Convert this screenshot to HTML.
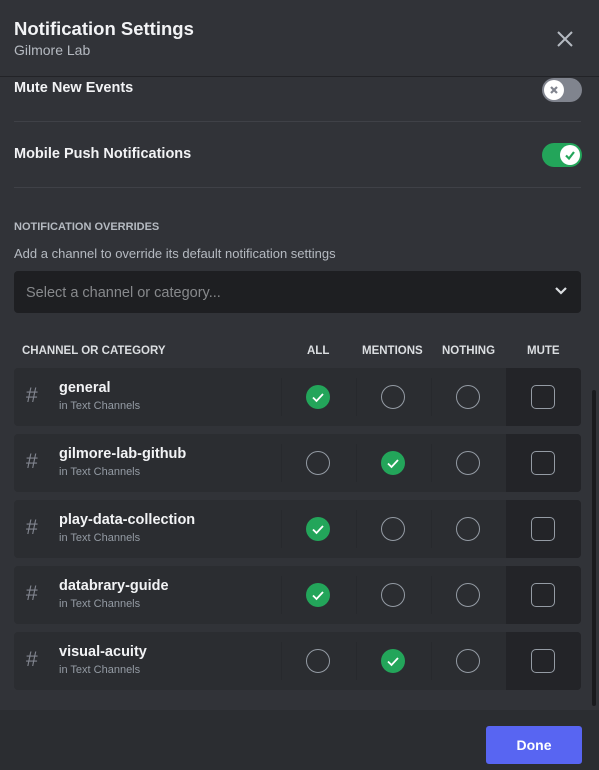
<!DOCTYPE html>
<html><head><meta charset="utf-8"><style>
*{margin:0;padding:0;box-sizing:border-box}
body{width:599px;height:770px;background:#313338;font-family:"Liberation Sans",sans-serif;position:relative;overflow:hidden;color:#f2f3f5}
.a{position:absolute}
.t{font-weight:bold;white-space:nowrap}
.row{position:absolute;left:14px;width:567px;height:58px;background:#2b2d31;border-radius:4px;overflow:hidden}
.mc{position:absolute;right:0;top:0;width:75px;height:58px;background:#232428}
.div{position:absolute;top:10px;width:1px;height:38px;background:#27292d}
.hash{position:absolute;left:12px;top:16px;font-size:21px;color:#80848e;font-weight:normal}
.nm{position:absolute;left:45px;top:12px;font-size:14.5px;font-weight:bold;color:#f2f3f5}
.sb{position:absolute;left:45px;top:32px;font-size:11px;color:#949ba4}
.c{position:absolute;top:17px;width:24px;height:24px;border-radius:50%;border:1.5px solid #949ba4}
.ck{border:none;background:#23a55a}
.sq{position:absolute;left:517px;top:17px;width:24px;height:24px;border-radius:5px;border:1.5px solid #949ba4}
.hd{position:absolute;top:345px;font-size:11.5px;font-weight:bold;color:#dbdee1}
</style></head><body>
<div class="a" style="left:0;top:0;width:599px;height:77px;background:#313338;border-bottom:1px solid #222327"></div>
<div class="a t" style="left:14px;top:18px;font-size:18.5px">Notification Settings</div>
<div class="a" style="left:14px;top:42px;font-size:14px;color:#b5bac1">Gilmore Lab</div>
<svg class="a" style="left:556px;top:30px" width="18" height="18"><path d="M2 2L16 16M16 2L2 16" stroke="#b5bac1" stroke-width="2"/></svg>

<div class="a t" style="left:14px;top:80px;font-size:14.5px;font-weight:bold">Mute New Events</div>
<div class="a" style="left:542px;top:78px;width:40px;height:24px;border-radius:12px;background:#80848e"></div>
<div class="a" style="left:544px;top:80px;width:20px;height:20px;border-radius:50%;background:#fff"></div>
<svg class="a" style="left:544px;top:80px" width="20" height="20"><path d="M7 7L13 13M13 7L7 13" stroke="#80848e" stroke-width="2.2"/></svg>
<div class="a" style="left:14px;top:121px;width:567px;height:1px;background:#3f4147"></div>

<div class="a t" style="left:14px;top:146px;font-size:14.5px">Mobile Push Notifications</div>
<div class="a" style="left:542px;top:143px;width:40px;height:24px;border-radius:12px;background:#23a55a"></div>
<div class="a" style="left:560px;top:145px;width:20px;height:20px;border-radius:50%;background:#fff"></div>
<svg class="a" style="left:560px;top:145px" width="20" height="20"><path d="M6 10.5L9 13.5L14 7" stroke="#23a55a" stroke-width="2.2" fill="none"/></svg>
<div class="a" style="left:14px;top:187px;width:567px;height:1px;background:#3f4147"></div>

<div class="a t" style="left:14px;top:221px;font-size:11px;color:#b5bac1">NOTIFICATION OVERRIDES</div>
<div class="a" style="left:14px;top:246px;font-size:13px;color:#b5bac1">Add a channel to override its default notification settings</div>
<div class="a" style="left:14px;top:271px;width:567px;height:42px;border-radius:4px;background:#1e1f22"></div>
<div class="a" style="left:26px;top:285px;font-size:14.5px;color:#87898c">Select a channel or category...</div>
<svg class="a" style="left:554px;top:285px" width="14" height="12"><path d="M2 3L7 8L12 3" stroke="#dbdee1" stroke-width="2.2" fill="none"/></svg>

<div class="hd" style="left:22px">CHANNEL OR CATEGORY</div>
<div class="hd" style="left:307px">ALL</div>
<div class="hd" style="left:362px">MENTIONS</div>
<div class="hd" style="left:442px">NOTHING</div>
<div class="hd" style="left:527px">MUTE</div>

<div class="row" style="top:368px"><div class="mc"></div><div class="div" style="left:267px"></div><div class="div" style="left:342px"></div><div class="div" style="left:417px"></div><div class="hash">#</div><div class="nm">general</div><div class="sb">in Text Channels</div>
<div class="c ck" style="left:292px"><svg width="24" height="24"><path d="M7 12.5L10.5 16L17 9" stroke="#fff" stroke-width="1.8" fill="none"/></svg></div><div class="c" style="left:367px"></div><div class="c" style="left:442px"></div><div class="sq"></div></div>

<div class="row" style="top:434px"><div class="mc"></div><div class="div" style="left:267px"></div><div class="div" style="left:342px"></div><div class="div" style="left:417px"></div><div class="hash">#</div><div class="nm">gilmore-lab-github</div><div class="sb">in Text Channels</div>
<div class="c" style="left:292px"></div><div class="c ck" style="left:367px"><svg width="24" height="24"><path d="M7 12.5L10.5 16L17 9" stroke="#fff" stroke-width="1.8" fill="none"/></svg></div><div class="c" style="left:442px"></div><div class="sq"></div></div>

<div class="row" style="top:500px"><div class="mc"></div><div class="div" style="left:267px"></div><div class="div" style="left:342px"></div><div class="div" style="left:417px"></div><div class="hash">#</div><div class="nm">play-data-collection</div><div class="sb">in Text Channels</div>
<div class="c ck" style="left:292px"><svg width="24" height="24"><path d="M7 12.5L10.5 16L17 9" stroke="#fff" stroke-width="1.8" fill="none"/></svg></div><div class="c" style="left:367px"></div><div class="c" style="left:442px"></div><div class="sq"></div></div>

<div class="row" style="top:566px"><div class="mc"></div><div class="div" style="left:267px"></div><div class="div" style="left:342px"></div><div class="div" style="left:417px"></div><div class="hash">#</div><div class="nm">databrary-guide</div><div class="sb">in Text Channels</div>
<div class="c ck" style="left:292px"><svg width="24" height="24"><path d="M7 12.5L10.5 16L17 9" stroke="#fff" stroke-width="1.8" fill="none"/></svg></div><div class="c" style="left:367px"></div><div class="c" style="left:442px"></div><div class="sq"></div></div>

<div class="row" style="top:632px"><div class="mc"></div><div class="div" style="left:267px"></div><div class="div" style="left:342px"></div><div class="div" style="left:417px"></div><div class="hash">#</div><div class="nm">visual-acuity</div><div class="sb">in Text Channels</div>
<div class="c" style="left:292px"></div><div class="c ck" style="left:367px"><svg width="24" height="24"><path d="M7 12.5L10.5 16L17 9" stroke="#fff" stroke-width="1.8" fill="none"/></svg></div><div class="c" style="left:442px"></div><div class="sq"></div></div>

<div class="a" style="left:592px;top:390px;width:4px;height:316px;border-radius:2px;background:#1a1b1e"></div>

<div class="a" style="left:0;top:710px;width:599px;height:60px;background:#2b2d31"></div>
<div class="a" style="left:486px;top:726px;width:96px;height:38px;border-radius:3px;background:#5865f2;color:#fff;font-size:14px;font-weight:bold;text-align:center;line-height:38px">Done</div>
</body></html>
